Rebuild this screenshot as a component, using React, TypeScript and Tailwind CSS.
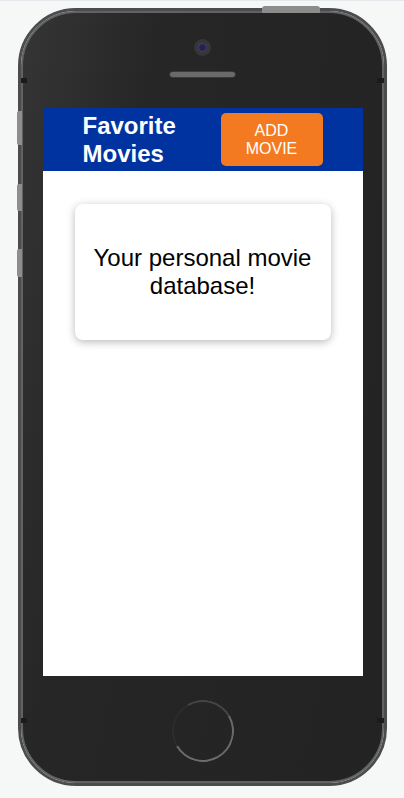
import React from "react"

const font = { fontFamily: '"Liberation Sans", Arial, sans-serif' }

function SideButtons() {
  return (
    <>
      <div className="absolute left-[241px] top-[-5px] h-[7px] w-[58px] rounded-t-[3px] bg-[#8c8c8c]" />
      <div className="absolute left-[-4px] top-[100px] h-[34px] w-[5px] rounded-l-[2px] bg-[#8e8e8e]" />
      <div className="absolute left-[-4px] top-[173px] h-[27px] w-[5px] rounded-l-[2px] bg-[#8e8e8e]" />
      <div className="absolute left-[-4px] top-[238px] h-[28px] w-[5px] rounded-l-[2px] bg-[#8e8e8e]" />
      <div className="absolute left-0 top-[67px] h-[5px] w-[6px] bg-[#1b1b1b]" />
      <div className="absolute right-0 top-[67px] h-[5px] w-[7px] bg-[#1b1b1b]" />
      <div className="absolute left-0 top-[707px] h-[5px] w-[6px] bg-[#1b1b1b]" />
      <div className="absolute right-0 top-[707px] h-[5px] w-[7px] bg-[#1b1b1b]" />
    </>
  )
}

function Screen() {
  return (
    <div className="flex h-[568px] w-[320px] flex-col bg-white" style={font}>
      <header className="flex h-[63px] items-center justify-between bg-[#0033a0] px-[40px]">
        <h1 className="text-[24px] font-bold leading-[28px] text-white">
          Favorite
          <br />
          Movies
        </h1>
        <button className="flex h-[53px] w-[102px] flex-col items-center justify-center rounded-[5px] bg-[#f47a21] text-[16px] leading-[18px] text-white">
          <span>ADD</span>
          <span>MOVIE</span>
        </button>
      </header>
      <div className="mx-auto mt-[33px] w-[256px] rounded-[8px] bg-white py-[40px] text-center text-[24px] leading-[28px] text-black shadow-[0_2px_8px_rgba(0,0,0,0.28)]">
        Your personal movie
        <br />
        database!
      </div>
    </div>
  )
}

export default function App() {
  return (
    <div className="h-[798px] w-[404px] border-t border-[#e4e7eb] bg-[#f6f7f7] pl-[18px] pt-[7px]">
      <div className="relative h-[778px] w-[369px] rounded-[58px] border-[3px] border-[#4a4c4d]">
        <SideButtons />
        <div className="flex h-full w-full flex-col items-center rounded-[55px] border-2 border-[#626262] bg-[linear-gradient(100deg,#353535_0%,#262626_28%,#232323_100%)]">
          <div className="mt-[26px] flex h-[17px] w-[17px] items-center justify-center rounded-full bg-[#363636]">
            <div className="h-[9px] w-[9px] rounded-full bg-[#24234a] shadow-[inset_0_0_2px_#6a6aa0]" />
          </div>
          <div className="mt-[15px] h-[7px] w-[67px] rounded-full border border-[#3a3a3a] bg-[radial-gradient(#6a6a6a_1px,#3c3c3c_1px)] bg-[length:2px_2px]" />
          <div className="mt-[30px]">
            <Screen />
          </div>
          <div className="mt-[24px] h-[62px] w-[62px] rotate-[15deg] rounded-full border-2 border-b-[#6c6c6c] border-l-[#2c2c2c] border-r-[#6a6a6a] border-t-[#454545]" />
        </div>
      </div>
    </div>
  )
}
